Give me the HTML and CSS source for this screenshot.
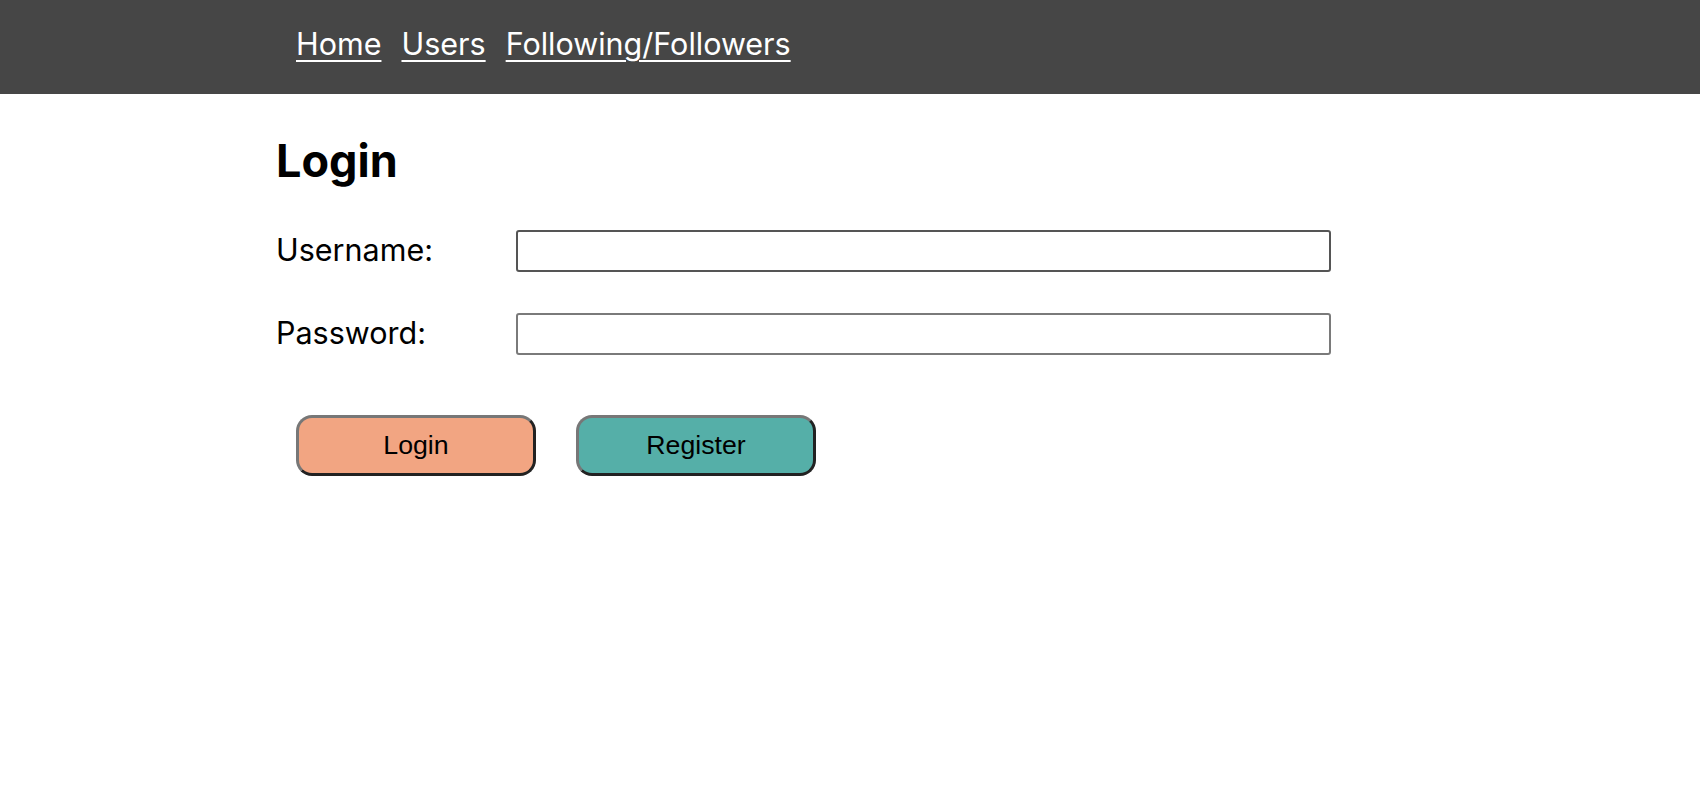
FILE: index.html
```html
<!DOCTYPE html>
<html lang="en">
<head>
<meta charset="utf-8">
<title>Login</title>
<link rel="stylesheet" href="styles.css">
</head>
<body>
<header class="topbar">
  <div class="container">
    <nav class="nav">
      <a href="#" class="nav-link">Home</a>
      <a href="#" class="nav-link">Users</a>
      <a href="#" class="nav-link">Following/Followers</a>
    </nav>
  </div>
</header>
<main class="container">
  <h1 class="title">Login</h1>
  <form class="login-form">
    <div class="fields">
      <div class="field">
        <label class="label" for="username">Username:</label>
        <input class="input input-active" id="username" type="text">
      </div>
      <div class="field">
        <label class="label" for="password">Password:</label>
        <input class="input" id="password" type="password">
      </div>
    </div>
    <div class="actions">
      <button type="button" class="btn btn-login">Login</button>
      <button type="button" class="btn btn-register">Register</button>
    </div>
  </form>
</main>
</body>
</html>
```

FILE: styles.css
```css
* { box-sizing: border-box; }

html, body {
  margin: 0;
  padding: 0;
  background: #ffffff;
}

body {
  font-family: Inter, "Noto Sans", sans-serif;
  color: #000;
}

.container {
  width: 1148px;
  margin: 0 auto;
}

.topbar {
  background: #464646;
  height: 94px;
  display: flex;
  align-items: center;
  padding-bottom: 7px;
}

.nav {
  display: flex;
  gap: 20px;
  padding-left: 20px;
}

.nav-link {
  color: #ffffff;
  font-size: 30.5px;
  text-decoration: underline;
  text-underline-offset: 5px;
  text-decoration-thickness: 2px;
}

.title {
  margin: 39px 0 0;
  font-size: 45px;
  font-weight: 700;
  line-height: normal;
}

.login-form {
  margin-top: 42px;
  display: flex;
  flex-direction: column;
}

.fields {
  display: flex;
  flex-direction: column;
  gap: 41px;
}

.field {
  display: grid;
  grid-template-columns: 240px 815px;
  align-items: center;
}

.label {
  font-size: 30.5px;
  line-height: normal;
  position: relative;
  top: -2px;
}

.input {
  height: 42px;
  border: 2px solid #7a7a7a;
  border-radius: 3px;
  background: #fff;
  font-size: 20px;
  padding: 0 6px;
}

.input-active {
  border-color: #555555;
}

.actions {
  display: flex;
  gap: 40px;
  margin-top: 60px;
  padding-left: 20px;
}

.btn {
  width: 240px;
  height: 61px;
  border-radius: 16px;
  border: 3px solid;
  border-color: #777777 #222222 #222222 #777777;
  font-family: "Liberation Sans", Arial, sans-serif;
  font-size: 26.7px;
  color: #000;
  padding: 0;
}

.btn-login {
  background: #f2a582;
}

.btn-register {
  background: #55afa8;
}
```
